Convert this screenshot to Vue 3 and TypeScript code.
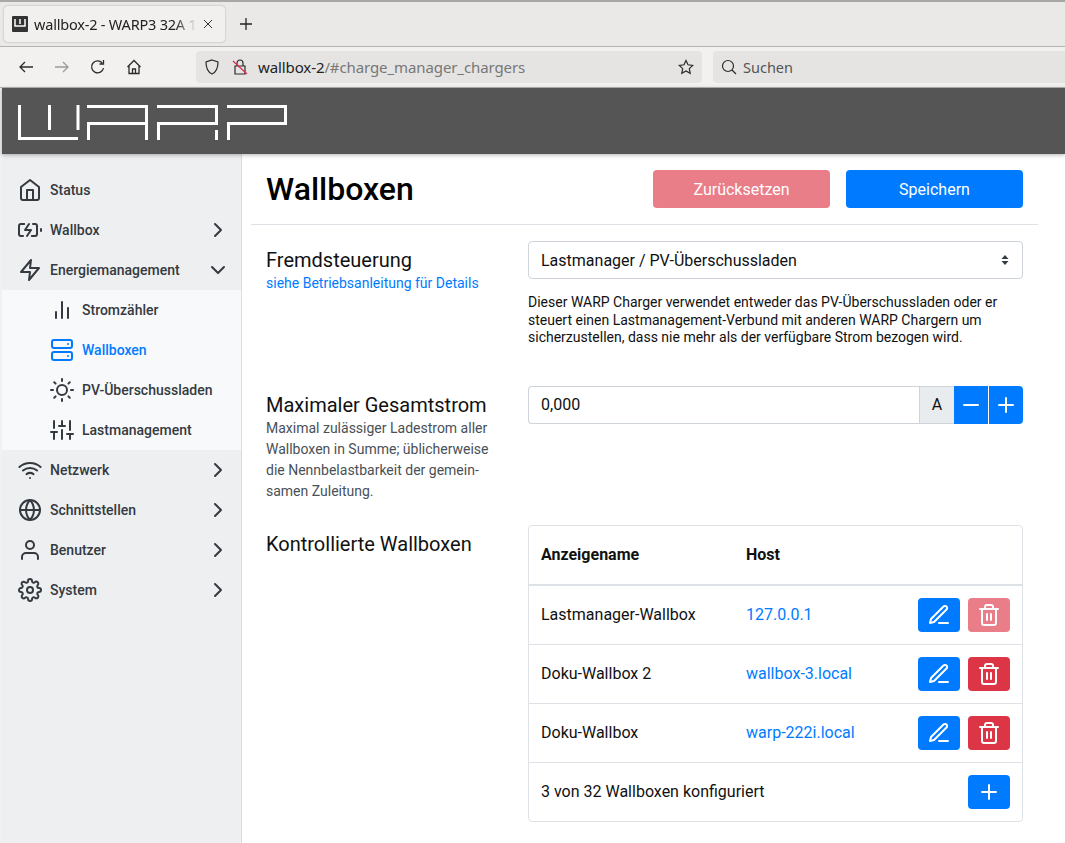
<template>
  <div class="browser">
    <div class="tabbar">
      <div class="tab">
        <svg class="favicon" viewBox="0 0 16 16">
          <rect width="16" height="16" rx="1" fill="#333" />
          <path d="M3 3v7h10V3M8 3v5" fill="none" stroke="#fff" stroke-width="1.5" />
        </svg>
        <span class="tab-title">wallbox-2 - WARP3 32A 1</span>
        <svg class="tab-close" viewBox="0 0 12 12"><path d="M2 2l8 8M10 2l-8 8" /></svg>
      </div>
      <svg class="new-tab" viewBox="0 0 14 14"><path d="M7 1v12M1 7h12" /></svg>
    </div>
    <div class="toolbar">
      <svg class="tool" viewBox="0 0 16 16"><path d="M15 8H2M7 3L2 8l5 5" /></svg>
      <svg class="tool tool-off" viewBox="0 0 16 16"><path d="M1 8h13M9 3l5 5-5 5" /></svg>
      <svg class="tool" viewBox="0 0 16 16"><path d="M13.5 9a6 6 0 1 1-1.3-5M13.5 1v4h-4" /></svg>
      <svg class="tool" viewBox="0 0 16 16"><path d="M1.5 8L8 1.5 14.5 8M3 7v7.5h10V7M6.5 14.5V10h3v4.500" /></svg>
      <div class="urlbar">
        <svg class="url-icon" viewBox="0 0 16 16"><path d="M8 1l6 2c0 6-1.500 10-6 12C3.500 13 2 9 2 3z" /></svg>
        <svg class="url-icon" viewBox="0 0 16 16">
          <path d="M3 7h10v8H3zM5 7V4a3 3 0 0 1 6 0v3" />
          <path class="url-slash" d="M1 2l14 13" />
        </svg>
        <span class="url-text">wallbox-2<span class="url-rest">/#charge_manager_chargers</span></span>
        <svg class="url-star" viewBox="0 0 16 16"><path d="M8 1.500l2 4.300 4.700.6-3.400 3.200.9 4.700L8 11.900l-4.200 2.400.9-4.700L1.300 6.400 6 5.800z" /></svg>
      </div>
      <div class="searchbar">
        <svg class="url-icon" viewBox="0 0 16 16"><path d="M7 1.500a5.500 5.500 0 1 0 0 11 5.500 5.500 0 0 0 0-11zM11 11l4 4" /></svg>
        <span class="search-text">Suchen</span>
      </div>
    </div>

    <div class="page">
      <header class="brand">
        <svg class="logo" viewBox="0 0 270 35">
          <path d="M1.500 0V33.500H60M31.500 0V25M60 0V25" />
          <path d="M69 1.500H128.500V35M70.500 35V18.500H128" />
          <path d="M139 1.500H198.500V18.500H139M140.500 18.500V35M198.500 25V35" />
          <path d="M209 1.500H267.500V18.500H209M210.500 18.500V35" />
        </svg>
      </header>
      <div class="body">
        <nav class="sidebar">
          <template v-for="item in nav" :key="item.label">
            <div class="nav-item">
              <svg class="icon" viewBox="0 0 24 24" v-html="icons[item.icon]"></svg>
              <span class="nav-label">{{ item.label }}</span>
              <svg v-if="item.chevron" class="chevron" viewBox="0 0 24 24" v-html="icons[item.chevron]"></svg>
            </div>
            <div v-if="item.children" class="subnav">
              <div
                v-for="sub in item.children"
                :key="sub.label"
                class="nav-item sub-item"
                :class="{ active: sub.active }"
              >
                <svg class="icon" viewBox="0 0 24 24" v-html="icons[sub.icon]"></svg>
                <span class="nav-label">{{ sub.label }}</span>
              </div>
            </div>
          </template>
        </nav>

        <main class="content">
          <div class="title-row">
            <h1 class="title">Wallboxen</h1>
            <button class="btn btn-danger-off btn-wide">Zurücksetzen</button>
            <button class="btn btn-primary btn-wide">Speichern</button>
          </div>

          <section class="form-row row-mode">
            <div class="form-label">
              <div class="label-main">Fremdsteuerung</div>
              <a class="label-link">siehe Betriebsanleitung für Details</a>
            </div>
            <div class="form-control-col">
              <div class="select">
                <span>Lastmanager / PV-Überschussladen</span>
                <svg class="select-arrows" viewBox="0 0 8 12"><path d="M4 1l3.500 4h-7zM4 11L.5 7h7z" /></svg>
              </div>
              <p class="help">
                Dieser WARP Charger verwendet entweder das PV-Überschussladen oder er<br />
                steuert einen Lastmanagement-Verbund mit anderen WARP Chargern um<br />
                sicherzustellen, dass nie mehr als der verfügbare Strom bezogen wird.
              </p>
            </div>
          </section>

          <section class="form-row row-current">
            <div class="form-label">
              <div class="label-main">Maximaler Gesamtstrom</div>
              <div class="label-desc">
                Maximal zulässiger Ladestrom aller<br />
                Wallboxen in Summe; üblicherweise<br />
                die Nennbelastbarkeit der gemein-<br />
                samen Zuleitung.
              </div>
            </div>
            <div class="form-control-col">
              <div class="input-group">
                <div class="input">0,000</div>
                <div class="unit">A</div>
                <button class="btn btn-primary step">
                  <svg class="icon-white" viewBox="0 0 24 24" v-html="icons.minus"></svg>
                </button>
                <button class="btn btn-primary step step-last">
                  <svg class="icon-white" viewBox="0 0 24 24" v-html="icons.plus"></svg>
                </button>
              </div>
            </div>
          </section>

          <section class="form-row">
            <div class="form-label">
              <div class="label-main">Kontrollierte Wallboxen</div>
            </div>
            <div class="form-control-col">
              <div class="card">
                <div class="table-row table-head">
                  <span class="col-name">Anzeigename</span>
                  <span class="cell">Host</span>
                </div>
                <div v-for="row in chargers" :key="row.name" class="table-row">
                  <span class="col-name">{{ row.name }}</span>
                  <a class="cell host">{{ row.host }}</a>
                  <div class="actions">
                    <button class="btn btn-primary btn-icon">
                      <svg class="icon-white" viewBox="0 0 24 24" v-html="icons.edit"></svg>
                    </button>
                    <button class="btn btn-icon" :class="row.locked ? 'btn-danger-off' : 'btn-danger'">
                      <svg class="icon-white" viewBox="0 0 24 24" v-html="icons.trash"></svg>
                    </button>
                  </div>
                </div>
                <div class="table-row table-foot">
                  <span class="cell">3 von 32 Wallboxen konfiguriert</span>
                  <div class="actions">
                    <button class="btn btn-primary btn-icon">
                      <svg class="icon-white" viewBox="0 0 24 24" v-html="icons.plus"></svg>
                    </button>
                  </div>
                </div>
              </div>
            </div>
          </section>
        </main>
      </div>
    </div>
  </div>
</template>

<script setup lang="ts">
interface NavItem {
  label: string;
  icon: string;
  chevron?: string;
  active?: boolean;
  children?: NavItem[];
}

// feather icons, inner markup only
const icons: Record<string, string> = {
  home: '<path d="M3 9l9-7 9 7v11a2 2 0 0 1-2 2H5a2 2 0 0 1-2-2z"/><polyline points="9 22 9 12 15 12 15 22"/>',
  battery:
    '<path d="M5 18H3a2 2 0 0 1-2-2V8a2 2 0 0 1 2-2h3.190M15 6h2a2 2 0 0 1 2 2v8a2 2 0 0 1-2 2h-3.190"/><line x1="23" y1="13" x2="23" y2="11"/><polyline points="11 6 7 12 13 12 9 18"/>',
  zap: '<polygon points="13 2 3 14 12 14 11 22 21 10 12 10 13 2"/>',
  chart: '<line x1="18" y1="20" x2="18" y2="10"/><line x1="12" y1="20" x2="12" y2="4"/><line x1="6" y1="20" x2="6" y2="14"/>',
  server:
    '<rect x="2" y="2" width="20" height="8" rx="2"/><rect x="2" y="14" width="20" height="8" rx="2"/><line x1="18" y1="6" x2="18.010" y2="6"/><line x1="18" y1="18" x2="18.010" y2="18"/>',
  sun: '<circle cx="12" cy="12" r="5"/><path d="M12 1v2M12 21v2M4.220 4.220l1.420 1.420M18.360 18.360l1.420 1.420M1 12h2M21 12h2M4.220 19.780l1.420-1.420M18.360 5.640l1.420-1.420"/>',
  sliders: '<path d="M4 21v-7M4 10V3M12 21v-9M12 8V3M20 21v-5M20 12V3M1 14h6M9 8h6M17 16h6"/>',
  wifi: '<path d="M5 12.550a11 11 0 0 1 14.080 0M1.420 9a16 16 0 0 1 21.160 0M8.530 16.110a6 6 0 0 1 6.950 0"/><line x1="12" y1="20" x2="12.010" y2="20"/>',
  globe:
    '<circle cx="12" cy="12" r="10"/><line x1="2" y1="12" x2="22" y2="12"/><path d="M12 2a15.300 15.300 0 0 1 4 10 15.300 15.300 0 0 1-4 10 15.300 15.300 0 0 1-4-10 15.300 15.300 0 0 1 4-10z"/>',
  user: '<path d="M20 21v-2a4 4 0 0 0-4-4H8a4 4 0 0 0-4 4v2"/><circle cx="12" cy="7" r="4"/>',
  settings:
    '<circle cx="12" cy="12" r="3"/><path d="M19.400 15a1.650 1.650 0 0 0 .33 1.820l.06.06a2 2 0 0 1 0 2.830 2 2 0 0 1-2.830 0l-.06-.06a1.650 1.650 0 0 0-1.820-.33 1.650 1.650 0 0 0-1 1.510V21a2 2 0 0 1-2 2 2 2 0 0 1-2-2v-.09A1.650 1.650 0 0 0 9 19.400a1.650 1.650 0 0 0-1.820.33l-.06.06a2 2 0 0 1-2.830 0 2 2 0 0 1 0-2.830l.06-.06a1.650 1.650 0 0 0 .33-1.820 1.650 1.650 0 0 0-1.510-1H3a2 2 0 0 1-2-2 2 2 0 0 1 2-2h.09A1.650 1.650 0 0 0 4.600 9a1.650 1.650 0 0 0-.33-1.820l-.06-.06a2 2 0 0 1 0-2.830 2 2 0 0 1 2.830 0l.06.06a1.650 1.650 0 0 0 1.820.33H9a1.650 1.650 0 0 0 1-1.510V3a2 2 0 0 1 2-2 2 2 0 0 1 2 2v.09a1.650 1.650 0 0 0 1 1.510 1.650 1.650 0 0 0 1.820-.33l.06-.06a2 2 0 0 1 2.830 0 2 2 0 0 1 0 2.830l-.06.06a1.650 1.650 0 0 0-.33 1.820V9a1.650 1.650 0 0 0 1.510 1H21a2 2 0 0 1 2 2 2 2 0 0 1-2 2h-.09a1.650 1.650 0 0 0-1.510 1z"/>',
  right: '<polyline points="9 18 15 12 9 6"/>',
  down: '<polyline points="6 9 12 15 18 9"/>',
  plus: '<path d="M12 5v14M5 12h14"/>',
  minus: '<path d="M5 12h14"/>',
  edit: '<path d="M12 20h9"/><path d="M16.500 3.500a2.121 2.121 0 0 1 3 3L7 19l-4 1 1-4L16.500 3.500z"/>',
  trash:
    '<polyline points="3 6 5 6 21 6"/><path d="M19 6v14a2 2 0 0 1-2 2H7a2 2 0 0 1-2-2V6m3 0V4a2 2 0 0 1 2-2h4a2 2 0 0 1 2 2v2"/><path d="M10 11v6M14 11v6"/>',
};

const nav: NavItem[] = [
  { label: 'Status', icon: 'home' },
  { label: 'Wallbox', icon: 'battery', chevron: 'right' },
  {
    label: 'Energiemanagement',
    icon: 'zap',
    chevron: 'down',
    children: [
      { label: 'Stromzähler', icon: 'chart' },
      { label: 'Wallboxen', icon: 'server', active: true },
      { label: 'PV-Überschussladen', icon: 'sun' },
      { label: 'Lastmanagement', icon: 'sliders' },
    ],
  },
  { label: 'Netzwerk', icon: 'wifi', chevron: 'right' },
  { label: 'Schnittstellen', icon: 'globe', chevron: 'right' },
  { label: 'Benutzer', icon: 'user', chevron: 'right' },
  { label: 'System', icon: 'settings', chevron: 'right' },
];

const chargers = [
  { name: 'Lastmanager-Wallbox', host: '127.0.0.1', locked: true },
  { name: 'Doku-Wallbox 2', host: 'wallbox-3.local', locked: false },
  { name: 'Doku-Wallbox', host: 'warp-222i.local', locked: false },
];
</script>

<style>
html,
body {
  margin: 0;
  height: 100%;
  overflow: hidden;
  background: #f2f1ef;
}
</style>

<style scoped>
.browser {
  height: 843px;
  overflow: hidden;
  font-family: 'Noto Sans', sans-serif;
  color: #111;
}

.tabbar {
  display: flex;
  align-items: center;
  padding: 0 0 0 4px;
  border-top: 2px solid #a9a8a6;
  border-bottom: 1px solid #b5b4b2;
  background: #eae9e7;
  box-sizing: border-box;
  height: 47px;
}

.tab {
  display: flex;
  align-items: center;
  width: 221px;
  height: 36px;
  padding: 0 11px 0 8px;
  box-sizing: border-box;
  background: #f1f0ee;
  border-radius: 4px;
  box-shadow: 0 0 2px #0000004d;
}

.favicon {
  flex: none;
  width: 16px;
  height: 16px;
  margin-right: 6px;
}

.tab-title {
  flex: 1;
  white-space: nowrap;
  font-size: 14.500px;
  letter-spacing: -0.2px;
  color: #222;
  -webkit-mask-image: linear-gradient(to right, #000 85%, transparent 98%);
  mask-image: linear-gradient(to right, #000 85%, transparent 98%);
}

.tab-close {
  flex: none;
  width: 12px;
  height: 12px;
  margin-left: 2px;
  fill: none;
  stroke: #333;
  stroke-width: 1;
}

.new-tab {
  width: 14px;
  height: 14px;
  margin-left: 14px;
  fill: none;
  stroke: #222;
  stroke-width: 1.300;
}

.toolbar {
  display: flex;
  align-items: center;
  height: 41px;
  border-bottom: 1px solid #b5b4b2;
  box-sizing: border-box;
  background: #f2f1ef;
  padding-left: 18px;
}

.tool {
  flex: none;
  width: 16px;
  height: 16px;
  margin-right: 20px;
  fill: none;
  stroke: #2b2b2b;
  stroke-width: 1.300;
}

.tool-off {
  stroke: #9a9a9a;
}

.urlbar,
.searchbar {
  display: flex;
  align-items: center;
  height: 32px;
  background: #e5e4e2;
  border-radius: 4px;
  box-sizing: border-box;
}

.urlbar {
  width: 506px;
  margin-left: 34px;
  padding: 0 8px;
  gap: 12px;
}

.searchbar {
  flex: 1;
  margin-left: 11px;
  padding: 0 8px;
  gap: 6px;
  border-radius: 4px 0 0 4px;
}

.url-icon,
.url-star {
  flex: none;
  width: 16px;
  height: 16px;
  fill: none;
  stroke: #2b2b2b;
  stroke-width: 1.200;
}

.url-slash {
  stroke: #e22850;
}

.url-text {
  flex: 1;
  margin-left: -2px;
  font-size: 15px;
  letter-spacing: -0.1px;
  color: #222;
}

.url-rest {
  color: #777;
}

.search-text {
  font-size: 14.500px;
  color: #555;
}

.page {
  margin-left: 2px;
  background: #fff;
  font-family: Roboto, sans-serif;
}

.brand {
  height: 66px;
  background: #555;
  display: flex;
  align-items: flex-start;
  padding: 17px 0 0 16px;
  box-sizing: border-box;
  box-shadow: 0 1px 4px #0000004d;
  position: relative;
}

.logo {
  width: 270px;
  height: 35px;
  fill: none;
  stroke: #fff;
  stroke-width: 3;
}

.body {
  display: flex;
  height: 689px;
}

.sidebar {
  flex: none;
  width: 239px;
  padding-top: 16px;
  background: #eeeff1;
  border-right: 1px solid #dcdde0;
}

.nav-item {
  display: flex;
  align-items: center;
  height: 40px;
  padding-left: 16px;
  font-size: 14px;
  font-weight: 500;
  color: #343a40;
}

.icon {
  flex: none;
  width: 24px;
  height: 24px;
  margin-right: 8px;
  fill: none;
  stroke: #343a40;
  stroke-width: 2;
  stroke-linecap: round;
  stroke-linejoin: round;
}

.nav-label {
  flex: 1;
}

.chevron {
  flex: none;
  width: 24px;
  height: 24px;
  margin-right: 11px;
  fill: none;
  stroke: #343a40;
  stroke-width: 2;
  stroke-linecap: round;
  stroke-linejoin: round;
}

.subnav {
  background: #f8f9fa;
}

.sub-item {
  padding-left: 48px;
}

.active {
  color: #007bff;
}

.active .icon {
  stroke: #007bff;
}

.content {
  flex: none;
  width: 787px;
  margin-left: 9px;
  font-size: 16px;
}

.title-row {
  display: flex;
  align-items: center;
  gap: 16px;
  height: 71px;
  padding: 0 15px;
  box-sizing: border-box;
  border-bottom: 1px solid #dee2e6;
}

.title {
  flex: 1;
  margin: 0;
  font-size: 32px;
  font-weight: 500;
  color: #000;
}

.btn {
  display: flex;
  align-items: center;
  justify-content: center;
  border: none;
  border-radius: 4px;
  padding: 0;
  font: inherit;
  color: #fff;
}

.btn-wide {
  width: 177px;
  height: 38px;
}

.btn-primary {
  background: #007bff;
}

.btn-danger {
  background: #dc3545;
}

.btn-danger-off {
  background: #e97d88;
}

.form-row {
  display: flex;
  padding-left: 15px;
  box-sizing: border-box;
}

.row-mode {
  padding-top: 16px;
  height: 161px;
}

.row-current {
  height: 139px;
}

.form-label {
  flex: none;
  width: 262px;
  padding-top: 7px;
}

.label-main {
  font-size: 20px;
  line-height: 24px;
  margin-bottom: 1px;
}

.label-link {
  display: block;
  font-size: 14px;
  line-height: 21px;
  color: #007bff;
}

.label-desc {
  font-size: 14px;
  line-height: 21px;
  color: #495057;
}

.form-control-col {
  flex: none;
  width: 495px;
}

.select {
  display: flex;
  align-items: center;
  justify-content: space-between;
  height: 38px;
  padding: 0 13px 0 12px;
  box-sizing: border-box;
  border: 1px solid #ced4da;
  border-radius: 4px;
}

.select-arrows {
  width: 8px;
  height: 12px;
  fill: #343a40;
}

.help {
  margin: 15.400px 0 0;
  font-size: 14px;
  line-height: 17.500px;
}

.input-group {
  display: flex;
  height: 38px;
}

.input {
  flex: 1;
  display: flex;
  align-items: center;
  padding: 0 0 2px 12px;
  border: 1px solid #ced4da;
  border-right: none;
  border-radius: 4px 0 0 4px;
}

.unit {
  display: flex;
  align-items: center;
  justify-content: center;
  width: 34px;
  padding-bottom: 2px;
  background: #e9ecef;
  border: 1px solid #ced4da;
  border-width: 1px 0 1px 1px;
}

.step {
  width: 34px;
  border-radius: 0;
}

.step-last {
  margin-left: 1px;
  border-radius: 0 4px 4px 0;
}

.icon-white {
  width: 24px;
  height: 24px;
  fill: none;
  stroke: #fff;
  stroke-width: 2;
  stroke-linecap: round;
  stroke-linejoin: round;
}

.card {
  border: 1px solid #dee2e6;
  border-radius: 4px;
}

.table-row {
  display: flex;
  align-items: center;
  height: 59px;
  padding: 0 12px;
  box-sizing: border-box;
  border-bottom: 1px solid #dee2e6;
}

.table-head {
  height: 60px;
  font-weight: 700;
  border-bottom-width: 2px;
}

.table-foot {
  height: 58px;
  border-bottom: none;
}

.col-name {
  width: 205px;
  margin-bottom: 2px;
}

.cell {
  margin-bottom: 2px;
}

.host {
  color: #007bff;
}

.actions {
  margin-left: auto;
  display: flex;
  gap: 8px;
}

.btn-icon {
  width: 42px;
  height: 34px;
}
</style>
